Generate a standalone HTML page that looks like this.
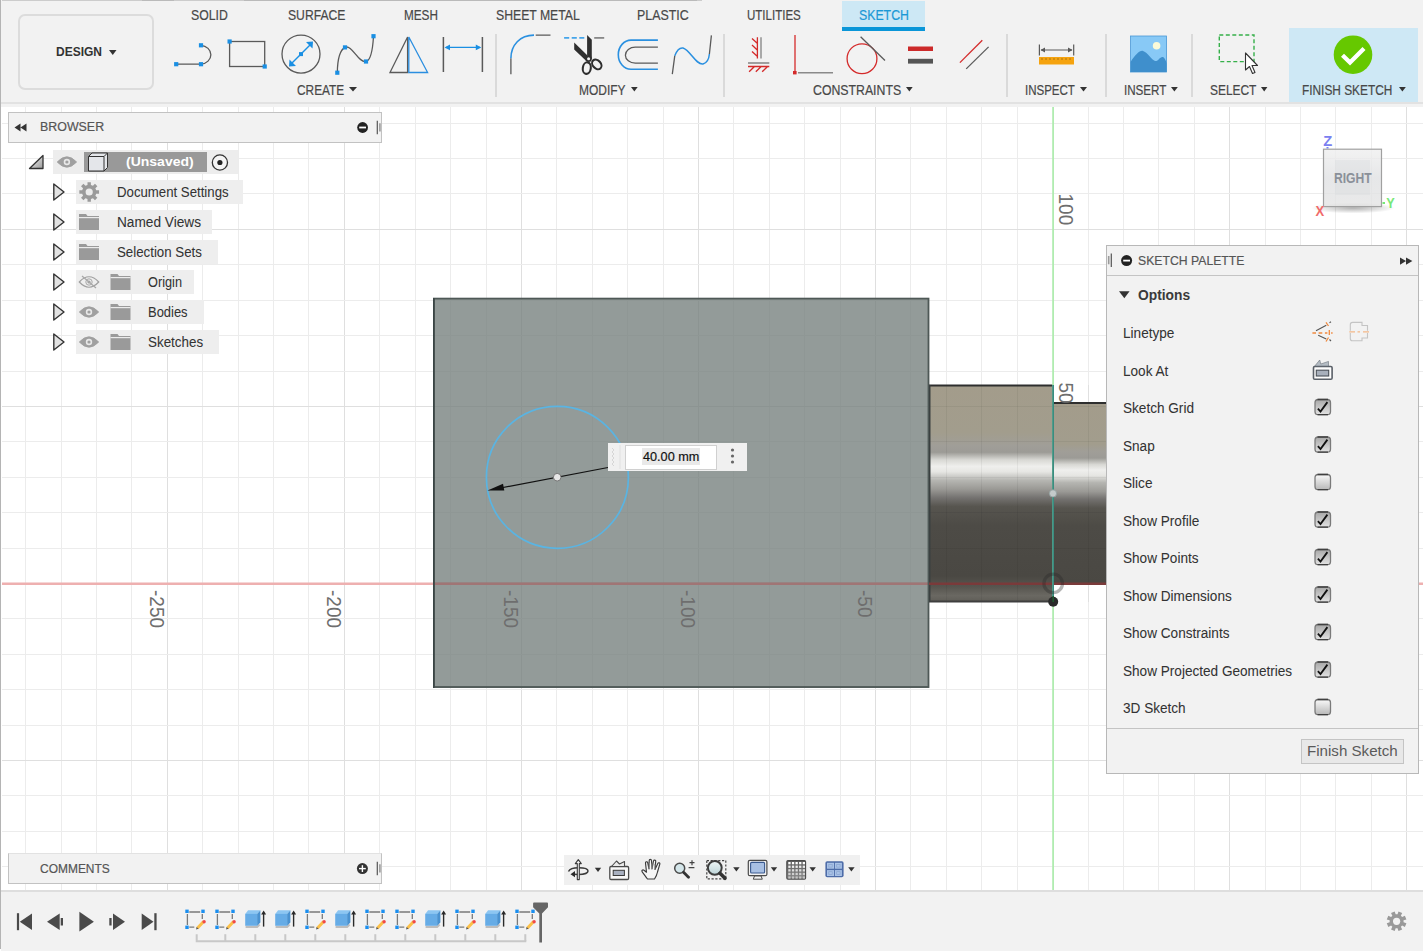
<!DOCTYPE html>
<html><head><meta charset="utf-8">
<style>
html,body{margin:0;padding:0}
body{width:1423px;height:951px;position:relative;overflow:hidden;background:#fff;font-family:"Liberation Sans",sans-serif;color:#3c3c3c}
.a{position:absolute}
.t{position:absolute;white-space:nowrap;line-height:1}
.tab{position:absolute;top:8px;font-size:12px;color:#474747;white-space:nowrap;line-height:14px}
.grp{position:absolute;top:84px;font-size:12px;color:#474747;white-space:nowrap;line-height:14px}
.dd{display:inline-block;width:0;height:0;border-left:3.5px solid transparent;border-right:3.5px solid transparent;border-top:5px solid #333;margin-left:4px;vertical-align:1px}
.sep{position:absolute;top:34px;width:2px;height:63px;background:#dadada}
svg{overflow:visible}
</style></head>
<body>

<svg class="a" style="left:0;top:0" width="1423" height="951">
<defs>
<linearGradient id="cyl1" x1="0" y1="0" x2="0" y2="1">
<stop offset="0" stop-color="#a39c8b"/>
<stop offset="0.22" stop-color="#a29d8d"/>
<stop offset="0.28" stop-color="#a09e98"/>
<stop offset="0.31" stop-color="#9c9b96"/>
<stop offset="0.345" stop-color="#d8d8d4"/>
<stop offset="0.375" stop-color="#efefed"/>
<stop offset="0.40" stop-color="#e6e6e3"/>
<stop offset="0.44" stop-color="#b5b5b1"/>
<stop offset="0.48" stop-color="#9a9995"/>
<stop offset="0.52" stop-color="#747270"/>
<stop offset="0.56" stop-color="#57554f"/>
<stop offset="0.65" stop-color="#4d4b46"/>
<stop offset="0.88" stop-color="#4a4843"/>
<stop offset="0.93" stop-color="#57554f"/>
<stop offset="0.97" stop-color="#6a6862"/>
<stop offset="1" stop-color="#5f5d57"/>
</linearGradient>
<linearGradient id="cyl2" x1="0" y1="0" x2="0" y2="1">
<stop offset="0" stop-color="#a39c8b"/>
<stop offset="0.227" stop-color="#a29d8d"/>
<stop offset="0.27" stop-color="#a09e98"/>
<stop offset="0.304" stop-color="#9c9b96"/>
<stop offset="0.34" stop-color="#d8d8d4"/>
<stop offset="0.37" stop-color="#efefed"/>
<stop offset="0.40" stop-color="#e6e6e3"/>
<stop offset="0.44" stop-color="#b5b5b1"/>
<stop offset="0.49" stop-color="#9a9995"/>
<stop offset="0.53" stop-color="#747270"/>
<stop offset="0.58" stop-color="#57554f"/>
<stop offset="0.68" stop-color="#4d4b46"/>
<stop offset="1" stop-color="#4a4843"/>
</linearGradient>
</defs>
<rect x="25" y="106" width="1" height="784" fill="#ececec"/>
<rect x="61" y="106" width="1" height="784" fill="#ececec"/>
<rect x="96" y="106" width="1" height="784" fill="#ececec"/>
<rect x="131" y="106" width="1" height="784" fill="#ececec"/>
<rect x="167" y="106" width="1" height="784" fill="#dfdfdf"/>
<rect x="202" y="106" width="1" height="784" fill="#ececec"/>
<rect x="238" y="106" width="1" height="784" fill="#ececec"/>
<rect x="273" y="106" width="1" height="784" fill="#ececec"/>
<rect x="308" y="106" width="1" height="784" fill="#ececec"/>
<rect x="344" y="106" width="1" height="784" fill="#dfdfdf"/>
<rect x="379" y="106" width="1" height="784" fill="#ececec"/>
<rect x="415" y="106" width="1" height="784" fill="#ececec"/>
<rect x="450" y="106" width="1" height="784" fill="#ececec"/>
<rect x="486" y="106" width="1" height="784" fill="#ececec"/>
<rect x="521" y="106" width="1" height="784" fill="#dfdfdf"/>
<rect x="556" y="106" width="1" height="784" fill="#ececec"/>
<rect x="592" y="106" width="1" height="784" fill="#ececec"/>
<rect x="627" y="106" width="1" height="784" fill="#ececec"/>
<rect x="663" y="106" width="1" height="784" fill="#ececec"/>
<rect x="698" y="106" width="1" height="784" fill="#dfdfdf"/>
<rect x="733" y="106" width="1" height="784" fill="#ececec"/>
<rect x="769" y="106" width="1" height="784" fill="#ececec"/>
<rect x="804" y="106" width="1" height="784" fill="#ececec"/>
<rect x="840" y="106" width="1" height="784" fill="#ececec"/>
<rect x="875" y="106" width="1" height="784" fill="#dfdfdf"/>
<rect x="910" y="106" width="1" height="784" fill="#ececec"/>
<rect x="946" y="106" width="1" height="784" fill="#ececec"/>
<rect x="981" y="106" width="1" height="784" fill="#ececec"/>
<rect x="1017" y="106" width="1" height="784" fill="#ececec"/>
<rect x="1088" y="106" width="1" height="784" fill="#ececec"/>
<rect x="1123" y="106" width="1" height="784" fill="#ececec"/>
<rect x="1158" y="106" width="1" height="784" fill="#ececec"/>
<rect x="1194" y="106" width="1" height="784" fill="#ececec"/>
<rect x="1229" y="106" width="1" height="784" fill="#dfdfdf"/>
<rect x="1265" y="106" width="1" height="784" fill="#ececec"/>
<rect x="1300" y="106" width="1" height="784" fill="#ececec"/>
<rect x="1335" y="106" width="1" height="784" fill="#ececec"/>
<rect x="1371" y="106" width="1" height="784" fill="#ececec"/>
<rect x="1406" y="106" width="1" height="784" fill="#dfdfdf"/>
<rect x="2" y="123" width="1421" height="1" fill="#ececec"/>
<rect x="2" y="158" width="1421" height="1" fill="#ececec"/>
<rect x="2" y="193" width="1421" height="1" fill="#ececec"/>
<rect x="2" y="229" width="1421" height="1" fill="#dfdfdf"/>
<rect x="2" y="264" width="1421" height="1" fill="#ececec"/>
<rect x="2" y="300" width="1421" height="1" fill="#ececec"/>
<rect x="2" y="335" width="1421" height="1" fill="#ececec"/>
<rect x="2" y="371" width="1421" height="1" fill="#ececec"/>
<rect x="2" y="406" width="1421" height="1" fill="#dfdfdf"/>
<rect x="2" y="441" width="1421" height="1" fill="#ececec"/>
<rect x="2" y="477" width="1421" height="1" fill="#ececec"/>
<rect x="2" y="512" width="1421" height="1" fill="#ececec"/>
<rect x="2" y="548" width="1421" height="1" fill="#ececec"/>
<rect x="2" y="618" width="1421" height="1" fill="#ececec"/>
<rect x="2" y="654" width="1421" height="1" fill="#ececec"/>
<rect x="2" y="689" width="1421" height="1" fill="#ececec"/>
<rect x="2" y="725" width="1421" height="1" fill="#ececec"/>
<rect x="2" y="760" width="1421" height="1" fill="#dfdfdf"/>
<rect x="2" y="795" width="1421" height="1" fill="#ececec"/>
<rect x="2" y="831" width="1421" height="1" fill="#ececec"/>
<rect x="2" y="866" width="1421" height="1" fill="#ececec"/>
<rect x="2" y="582.5" width="1421" height="2.5" fill="#eeb0b0"/>
<rect x="433" y="298" width="496" height="390" fill="rgb(113,123,121)" fill-opacity="0.76"/>
<rect x="433" y="582.5" width="496" height="2.5" fill="#a07575"/>
<rect x="433.9" y="298.6" width="494.6" height="388.4" fill="none" stroke="#4e5856" stroke-width="1.8"/>
<rect x="433" y="298" width="1.6" height="390" fill="#3a4545"/>
<rect x="929" y="385" width="124" height="217" fill="url(#cyl1)"/>
<rect x="1053" y="403" width="53" height="181" fill="url(#cyl2)"/>
<rect x="946" y="385" width="1" height="217" fill="#000" fill-opacity="0.05"/>
<rect x="981" y="385" width="1" height="217" fill="#000" fill-opacity="0.05"/>
<rect x="1017" y="385" width="1" height="217" fill="#000" fill-opacity="0.05"/>
<rect x="1088" y="385" width="1" height="217" fill="#000" fill-opacity="0.05"/>
<rect x="929" y="406" width="177" height="1" fill="#000" fill-opacity="0.05"/>
<rect x="929" y="441" width="177" height="1" fill="#000" fill-opacity="0.05"/>
<rect x="929" y="477" width="177" height="1" fill="#000" fill-opacity="0.05"/>
<rect x="929" y="512" width="177" height="1" fill="#000" fill-opacity="0.05"/>
<rect x="929" y="548" width="177" height="1" fill="#000" fill-opacity="0.05"/>
<rect x="929" y="384.5" width="124" height="2" fill="#2e2e2e"/>
<rect x="1053" y="402" width="53" height="2" fill="#2e2e2e"/>
<rect x="929" y="600.5" width="124" height="2" fill="#3e3e3e"/>
<rect x="929" y="385" width="1.5" height="217" fill="#3a4040"/>
<rect x="929" y="582.5" width="177" height="2.5" fill="#7a3a3a"/>
<rect x="1052.2" y="106" width="1.8" height="784" fill="#b0ecb0"/>
<rect x="1052.2" y="385" width="1.8" height="217" fill="#3a8c80"/>
<circle cx="1053.2" cy="583.4" r="9.3" fill="none" stroke="#282828" stroke-opacity="0.35" stroke-width="3.2"/>
<circle cx="1053.2" cy="601.7" r="5" fill="#2a2a2a"/>
<path d="M1053.2 596 V602" stroke="#1e5a30" stroke-width="1.5"/>
<circle cx="1053" cy="493.4" r="3.6" fill="#c4caca" stroke="#8fa0a0" stroke-width="0.8"/>
<circle cx="557.4" cy="477.3" r="71" fill="none" stroke="#5ab4e2" stroke-width="1.7"/>
<line x1="608" y1="467.5" x2="498" y2="488.5" stroke="#111" stroke-width="1.2"/>
<path d="M487.5 490.5 L503 483.8 L504.3 490.6 Z" fill="#111"/>
<circle cx="557.2" cy="477.2" r="3.8" fill="#e8e8e8" stroke="#777" stroke-width="1"/>
<text x="0" y="0" transform="translate(150.2,590) rotate(90) scale(0.95 1)" font-family="Liberation Sans" font-size="20" fill="#6e6e6e">-250</text>
<text x="0" y="0" transform="translate(327.2,590) rotate(90) scale(0.95 1)" font-family="Liberation Sans" font-size="20" fill="#6e6e6e">-200</text>
<text x="0" y="0" transform="translate(504.2,590) rotate(90) scale(0.95 1)" font-family="Liberation Sans" font-size="20" fill="#6e6e6e">-150</text>
<text x="0" y="0" transform="translate(681.2,590) rotate(90) scale(0.95 1)" font-family="Liberation Sans" font-size="20" fill="#6e6e6e">-100</text>
<text x="0" y="0" transform="translate(858.2,590) rotate(90) scale(0.95 1)" font-family="Liberation Sans" font-size="20" fill="#6e6e6e">-50</text>
<text x="0" y="0" transform="translate(1059.2,193.5) rotate(90) scale(0.95 1)" font-family="Liberation Sans" font-size="20" fill="#6e6e6e">100</text>
<text x="0" y="0" transform="translate(1059.2,382.5) rotate(90) scale(0.95 1)" font-family="Liberation Sans" font-size="20" fill="#6e6e6e">50</text>
</svg>
<div class="a" style="left:0;top:0;width:1423px;height:107px;background:#f2f2f2"></div>
<div class="a" style="left:0;top:102px;width:1423px;height:2px;background:#e2e2e2"></div>
<div class="a" style="left:2px;top:0;width:700px;height:1px;background:#cccccc"></div><div class="a" style="left:142px;top:0;width:32px;height:1px;background:#bababa"></div><div class="a" style="left:244px;top:0;width:453px;height:1px;background:#bababa"></div>
<div class="a" style="left:18px;top:14px;width:132px;height:72px;border:2px solid #dcdcdc;border-radius:7px"></div>
<div class="a" style="left:842px;top:1px;width:83px;height:30px;background:#cde8f5"></div>
<div class="a" style="left:842px;top:27px;width:83px;height:4px;background:#0a96d8"></div>
<div class="sep" style="left:495px"></div>
<div class="sep" style="left:723px"></div>
<div class="sep" style="left:1006px"></div>
<div class="sep" style="left:1105px"></div>
<div class="sep" style="left:1191px"></div>
<div class="a" style="left:1289px;top:28px;width:129px;height:74px;background:#cee8f5"></div>

<div class="t" style="left:56.20px;top:45.20px;font-size:13px;color:#333;font-weight:bold;transform:scaleX(0.9227);transform-origin:0 0;">DESIGN</div>
<svg class="a" style="left:108.25px;top:48.80px" width="9.50" height="7.00"><path d="M1 1 H8.50 L4.75 6.00 Z" fill="#333"/></svg>
<div class="t" style="left:191.20px;top:7.65px;font-size:14px;color:#484848;-webkit-text-stroke:0.2px #484848;transform:scaleX(0.8738);transform-origin:0 0;">SOLID</div>
<div class="t" style="left:288.40px;top:7.65px;font-size:14px;color:#484848;-webkit-text-stroke:0.2px #484848;transform:scaleX(0.8677);transform-origin:0 0;">SURFACE</div>
<div class="t" style="left:404.30px;top:7.65px;font-size:14px;color:#484848;-webkit-text-stroke:0.2px #484848;transform:scaleX(0.8379);transform-origin:0 0;">MESH</div>
<div class="t" style="left:496.30px;top:7.65px;font-size:14px;color:#484848;-webkit-text-stroke:0.2px #484848;transform:scaleX(0.8732);transform-origin:0 0;">SHEET METAL</div>
<div class="t" style="left:637.20px;top:7.65px;font-size:14px;color:#484848;-webkit-text-stroke:0.2px #484848;transform:scaleX(0.8839);transform-origin:0 0;">PLASTIC</div>
<div class="t" style="left:747.40px;top:7.65px;font-size:14px;color:#484848;-webkit-text-stroke:0.2px #484848;transform:scaleX(0.8229);transform-origin:0 0;">UTILITIES</div>
<div class="t" style="left:858.90px;top:7.65px;font-size:14px;color:#1b98d5;-webkit-text-stroke:0.2px #1b98d5;transform:scaleX(0.8790);transform-origin:0 0;">SKETCH</div>
<div class="t" style="left:297.30px;top:82.95px;font-size:14px;color:#484848;-webkit-text-stroke:0.2px #484848;transform:scaleX(0.8471);transform-origin:0 0;">CREATE</div>
<svg class="a" style="left:348.00px;top:86.00px" width="10.00" height="6.60"><path d="M1 1 H9.00 L5.00 5.60 Z" fill="#333"/></svg>
<div class="t" style="left:579.00px;top:82.95px;font-size:14px;color:#484848;-webkit-text-stroke:0.2px #484848;transform:scaleX(0.8557);transform-origin:0 0;">MODIFY</div>
<svg class="a" style="left:630.30px;top:86.00px" width="8.70" height="6.60"><path d="M1 1 H7.70 L4.35 5.60 Z" fill="#333"/></svg>
<div class="t" style="left:813.00px;top:82.95px;font-size:14px;color:#484848;-webkit-text-stroke:0.2px #484848;transform:scaleX(0.8783);transform-origin:0 0;">CONSTRAINTS</div>
<svg class="a" style="left:904.90px;top:86.00px" width="8.70" height="6.60"><path d="M1 1 H7.70 L4.35 5.60 Z" fill="#333"/></svg>
<div class="t" style="left:1024.90px;top:82.95px;font-size:14px;color:#484848;-webkit-text-stroke:0.2px #484848;transform:scaleX(0.8222);transform-origin:0 0;">INSPECT</div>
<svg class="a" style="left:1078.70px;top:86.00px" width="9.00" height="6.60"><path d="M1 1 H8.00 L4.50 5.60 Z" fill="#333"/></svg>
<div class="t" style="left:1123.50px;top:82.95px;font-size:14px;color:#484848;-webkit-text-stroke:0.2px #484848;transform:scaleX(0.8297);transform-origin:0 0;">INSERT</div>
<svg class="a" style="left:1169.80px;top:86.00px" width="8.80" height="6.60"><path d="M1 1 H7.80 L4.40 5.60 Z" fill="#333"/></svg>
<div class="t" style="left:1209.60px;top:82.95px;font-size:14px;color:#484848;-webkit-text-stroke:0.2px #484848;transform:scaleX(0.8520);transform-origin:0 0;">SELECT</div>
<svg class="a" style="left:1260.40px;top:86.00px" width="8.40" height="6.60"><path d="M1 1 H7.40 L4.20 5.60 Z" fill="#333"/></svg>
<div class="t" style="left:1302.40px;top:82.95px;font-size:14px;color:#484848;-webkit-text-stroke:0.2px #484848;transform:scaleX(0.8476);transform-origin:0 0;">FINISH SKETCH</div>
<svg class="a" style="left:1397.60px;top:86.00px" width="8.80" height="6.60"><path d="M1 1 H7.80 L4.40 5.60 Z" fill="#333"/></svg>
<svg class="a" style="left:0;top:0" width="1423" height="106">
<path d="M176 64.2 H201 M201 45.3 A11 9.5 0 0 1 201 64.2" fill="none" stroke="#5a5a5a" stroke-width="1.3"/>
<rect x="174.1" y="62.1" width="4.2" height="4.2" fill="#1a8fe3"/><rect x="198.9" y="62.1" width="4.2" height="4.2" fill="#1a8fe3"/><rect x="198.9" y="43.2" width="4.2" height="4.2" fill="#1a8fe3"/>
<rect x="229.6" y="41.5" width="35.1" height="25" fill="none" stroke="#5a5a5a" stroke-width="1.3"/>
<rect x="227.5" y="39.4" width="4.2" height="4.2" fill="#1a8fe3"/><rect x="262.6" y="64.4" width="4.2" height="4.2" fill="#1a8fe3"/>
<circle cx="301" cy="54.1" r="19" fill="none" stroke="#5a5a5a" stroke-width="1.3"/>
<path d="M290 65 L312 43" stroke="#1a8fe3" stroke-width="1.5"/><path d="M289 66.5 L289.5 59.5 L296 66 Z M313 41.5 L312.5 48.5 L306 42 Z" fill="#1a8fe3"/>
<rect x="299.0" y="52.1" width="4" height="4" fill="#1a8fe3"/>
<path d="M337.3 72.7 C337.5 60 340 50 345 47.4 C352 44 358 63 366 61.5 C372 60 373 45 373.5 36.2" fill="none" stroke="#5a5a5a" stroke-width="1.3"/>
<rect x="335.2" y="70.6" width="4.2" height="4.2" fill="#1a8fe3"/><rect x="342.9" y="45.3" width="4.2" height="4.2" fill="#1a8fe3"/><rect x="363.9" y="59.4" width="4.2" height="4.2" fill="#1a8fe3"/><rect x="371.4" y="34.1" width="4.2" height="4.2" fill="#1a8fe3"/>
<path d="M407.6 37 L390 72.5 H407.6 Z" fill="none" stroke="#5a5a5a" stroke-width="1.3"/>
<path d="M408.8 37 L427.6 72.5 H408.8 Z" fill="none" stroke="#2a8ee0" stroke-width="1.3"/>
<path d="M443.4 37 V72 M482.4 37 V72" stroke="#5a5a5a" stroke-width="1.5"/>
<path d="M446 47.4 H480" stroke="#1a8fe3" stroke-width="1.3"/><path d="M444.5 47.4 L450 44.5 V50.3 Z M481.3 47.4 L475.8 44.5 V50.3 Z" fill="#1a8fe3"/>
<path d="M510.9 58.2 V74.2 M535.7 35.1 H550.5" stroke="#5a5a5a" stroke-width="1.3" fill="none"/>
<path d="M510.9 58.2 C511 45 520 35.1 534 35.1" stroke="#2a90e0" stroke-width="1.6" fill="none"/>
<path d="M564.1 37.9 H584.3" stroke="#45a5ea" stroke-width="1.9" stroke-dasharray="5.1 2.5" fill="none"/><path d="M594.2 37.9 H604.2" stroke="#888" stroke-width="1.8"/>
<path d="M587.1 35 L591.8 39.7 V59.5 L587.1 55.5 Z" fill="#2e2e2e"/>
<path d="M574.2 42.4 L587.5 55.5 L590.5 58.2 L586.3 61 L574.2 49.5 Z" fill="#2e2e2e"/>
<circle cx="588.6" cy="58.7" r="3.2" fill="#2e2e2e"/><circle cx="588.6" cy="58.7" r="1.5" fill="#f2f2f2"/>
<ellipse cx="586.8" cy="68.1" rx="4.0" ry="5.8" fill="none" stroke="#2e2e2e" stroke-width="2.1" transform="rotate(8 586.8 68.1)"/>
<ellipse cx="596.8" cy="64.4" rx="4.0" ry="5.4" fill="none" stroke="#2e2e2e" stroke-width="2.1" transform="rotate(-42 596.8 64.4)"/>
<path d="M657.9 40.1 H631 A12.7 14.55 0 0 0 631 69.2 H657.9" fill="none" stroke="#2a90e0" stroke-width="1.6"/>
<path d="M657.9 47.2 H635.3 A9.9 8 0 0 0 635.3 63.2 H657.9" fill="none" stroke="#5a5a5a" stroke-width="1.3"/>
<path d="M672.3 74.2 L674.8 55.7 M709.4 54 L711.4 35.4" fill="none" stroke="#5a5a5a" stroke-width="1.3"/>
<path d="M674.8 55.7 C677 50 680 47.5 683 48 C690 50 696 65 703 64 C707 63 709 58 709.4 54" fill="none" stroke="#2a90e0" stroke-width="1.5"/>
<path d="M761 37.3 V58.5" stroke="#8a8a8a" stroke-width="1.4"/>
<path d="M752 38.4 L757.5 43.5 M752 45.1 L757.5 50.2 M752 51.4 L757.5 56.5 M757.4 37.3 V58.5" stroke="#d42a2a" stroke-width="1.3" fill="none"/>
<path d="M748 63 H769.3" stroke="#8a8a8a" stroke-width="1.6"/>
<path d="M748 66.5 H769.3 M749.1 71.8 L754.5 66.5 M755.8 71.8 L761.2 66.5 M762.2 71.8 L767.6 66.5" stroke="#d42a2a" stroke-width="1.3" fill="none"/>
<path d="M795 35 V71" stroke="#d42a2a" stroke-width="1.3"/><rect x="793" y="71" width="3.6" height="3.4" fill="#d42a2a"/><path d="M798 72.8 H833" stroke="#8a8a8a" stroke-width="1.5"/>
<circle cx="862" cy="58.7" r="14.9" fill="none" stroke="#d42a2a" stroke-width="1.3"/><path d="M860.6 36.7 L885 60.5" stroke="#5a5a5a" stroke-width="1.3"/>
<rect x="908" y="46.5" width="25" height="4.5" fill="#cc2a2a"/><rect x="908" y="58.8" width="25" height="4.8" fill="#555"/>
<path d="M959.9 62.6 L982.3 40.3" stroke="#d42a2a" stroke-width="1.3"/><path d="M966.2 68.9 L988.6 46.9" stroke="#5a5a5a" stroke-width="1.3"/>
<rect x="1039" y="57" width="35" height="7.5" fill="#f5a30f"/>
<path d="M1042 58 V60 M1046 58 V60 M1050 58 V60 M1054 58 V60 M1058 58 V60 M1062 58 V60 M1066 58 V60 M1070 58 V60" stroke="#9a6a10" stroke-width="0.8"/>
<path d="M1039.4 44.6 V55.4 M1073.7 44.6 V55.4 M1041 50 H1072" stroke="#5a5a5a" stroke-width="1.2"/><path d="M1040.5 50 L1045 47.5 V52.5 Z M1072.6 50 L1068 47.5 V52.5 Z" fill="#5a5a5a"/>
<rect x="1130.6" y="36" width="36" height="36" fill="#88c9f6" stroke="#4a98d6" stroke-width="0.8"/>
<circle cx="1156.6" cy="45.8" r="3.8" fill="#fafad8"/>
<path d="M1130.6 62 C1135 55 1140 50 1143 51 C1147 52 1152 60 1155 61 C1158 62 1160 56 1163 57 C1165 58 1166.6 62 1166.6 64 V72 H1130.6 Z" fill="#3f8fcc"/>
<rect x="1219.3" y="35" width="34.7" height="26.6" fill="none" stroke="#36b04a" stroke-width="1.4" stroke-dasharray="4 2.5"/>
<path d="M1245.5 53 V70 L1249.5 66.5 L1252.5 73.5 L1255 72.5 L1252 65.5 L1257.5 65.5 Z" fill="#fff" stroke="#333" stroke-width="1.1" stroke-linejoin="round"/>
<circle cx="1353" cy="54.7" r="19.3" fill="#66c800"/>
<path d="M1342.5 55.2 L1350 62.5 L1364 48.5" fill="none" stroke="#fff" stroke-width="4.3"/>
</svg>
<div class="a" style="left:0;top:0;width:1px;height:949px;background:#b4b4b4"></div>
<div class="a" style="left:1px;top:890px;width:1422px;height:61px;background:#f2f2f2"></div>
<div class="a" style="left:1px;top:890px;width:1422px;height:2px;background:#dedede"></div>

<div class="a" style="left:8px;top:112px;width:372px;height:29px;border:1px solid #c2c2c2;background:#f2f2f2"></div>
<div class="t" style="left:39.70px;top:120.39px;font-size:13.6px;color:#555;-webkit-text-stroke:0.2px #555;transform:scaleX(0.9125);transform-origin:0 0;">BROWSER</div>
<div class="a" style="left:8px;top:853px;width:372px;height:29px;border:1px solid #c2c2c2;border-top-color:#e2e2e2;background:#f2f2f2"></div>
<div class="t" style="left:40.10px;top:861.63px;font-size:13.2px;color:#555;-webkit-text-stroke:0.2px #555;transform:scaleX(0.9075);transform-origin:0 0;">COMMENTS</div>
<div class="a" style="left:53px;top:150px;width:185px;height:24px;background:#ededed"></div>
<div class="a" style="left:84px;top:152px;width:123px;height:20px;background:#999"></div>
<div class="t" style="left:126.20px;top:155.29px;font-size:13.6px;color:#fff;font-weight:bold;transform:scaleX(1.0296);transform-origin:0 0;">(Unsaved)</div>
<div class="a" style="left:76px;top:180px;width:167px;height:24px;background:#eeeeee"></div>
<div class="t" style="left:117.20px;top:185.15px;font-size:14px;color:#333;-webkit-text-stroke:0.05px #333;transform:scaleX(0.9434);transform-origin:0 0;">Document Settings</div>
<div class="a" style="left:76px;top:210px;width:136px;height:24px;background:#eeeeee"></div>
<div class="t" style="left:117.20px;top:215.15px;font-size:14px;color:#333;-webkit-text-stroke:0.05px #333;transform:scaleX(0.9756);transform-origin:0 0;">Named Views</div>
<div class="a" style="left:76px;top:240px;width:142px;height:24px;background:#eeeeee"></div>
<div class="t" style="left:117.20px;top:245.15px;font-size:14px;color:#333;-webkit-text-stroke:0.05px #333;transform:scaleX(0.9483);transform-origin:0 0;">Selection Sets</div>
<div class="a" style="left:76px;top:270px;width:118px;height:24px;background:#eeeeee"></div>
<div class="t" style="left:148.40px;top:275.15px;font-size:14px;color:#333;-webkit-text-stroke:0.05px #333;transform:scaleX(0.9096);transform-origin:0 0;">Origin</div>
<div class="a" style="left:76px;top:300px;width:128px;height:24px;background:#eeeeee"></div>
<div class="t" style="left:148.40px;top:305.15px;font-size:14px;color:#333;-webkit-text-stroke:0.05px #333;transform:scaleX(0.9244);transform-origin:0 0;">Bodies</div>
<div class="a" style="left:76px;top:330px;width:143px;height:24px;background:#eeeeee"></div>
<div class="t" style="left:148.40px;top:335.15px;font-size:14px;color:#333;-webkit-text-stroke:0.05px #333;transform:scaleX(0.9564);transform-origin:0 0;">Sketches</div>
<svg class="a" style="left:0;top:0" width="400" height="400">
<path d="M14.5 127.5 L20.5 123.5 V131.5 Z M20.5 127.5 L26.5 123.5 V131.5 Z" fill="#333"/>
<circle cx="362.6" cy="127.5" r="5.4" fill="#222"/><rect x="359.2" y="126.6" width="6.8" height="1.8" fill="#fff"/>
<path d="M377.3 120.8 V134.3" stroke="#555" stroke-width="1.2"/><path d="M379.9 123.3 V131.6" stroke="#9a9a9a" stroke-width="1.6"/>
<defs><linearGradient id="tg" x1="0" y1="0" x2="1" y2="1"><stop offset="0" stop-color="#fafafa"/><stop offset="1" stop-color="#9a9a9a"/></linearGradient></defs>
<path d="M43 155.5 V168.5 H29.5 Z" fill="url(#tg)" stroke="#333" stroke-width="1.3" stroke-linejoin="round"/>
<path d="M57.2 162 Q66.9 151.5 76.60000000000001 162 Q66.9 172.5 57.2 162 Z" fill="#a0a0a0" stroke="#a0a0a0" stroke-width="0.8"/>
<circle cx="66.9" cy="162" r="3.2" fill="#e8e8e8" stroke="none" stroke-width="1"/><circle cx="66.9" cy="162" r="1.6" fill="#a0a0a0"/>
<path d="M88.5 156.5 L92 153 H107.5 V167.5 L104 171 H88.5 Z" fill="#e4e6ea" stroke="#333" stroke-width="1"/>
<path d="M88.5 156.5 H104 V171 M104 156.5 L107.5 153" fill="none" stroke="#333" stroke-width="1"/>
<circle cx="219.9" cy="162.5" r="7.6" fill="#f4f4f4" stroke="#333" stroke-width="1.3"/><circle cx="219.9" cy="162.5" r="2.6" fill="#222"/>
<path d="M53.8 184 L64 192 L53.8 200 Z" fill="#e2e2e2" stroke="#333" stroke-width="1.4" stroke-linejoin="round"/>
<path d="M96.19 190.29 L99.06 190.31 L99.06 193.69 L96.19 193.71 L95.36 195.74 L97.37 197.77 L94.97 200.17 L92.94 198.16 L90.91 198.99 L90.89 201.86 L87.51 201.86 L87.49 198.99 L85.46 198.16 L83.43 200.17 L81.03 197.77 L83.04 195.74 L82.21 193.71 L79.34 193.69 L79.34 190.31 L82.21 190.29 L83.04 188.26 L81.03 186.23 L83.43 183.83 L85.46 185.84 L87.49 185.01 L87.51 182.14 L90.89 182.14 L90.91 185.01 L92.94 185.84 L94.97 183.83 L97.37 186.23 L95.36 188.26 Z" fill="#9a9a9a"/><circle cx="89.2" cy="192" r="3.60" fill="#ebebeb"/>
<path d="M53.8 214 L64 222 L53.8 230 Z" fill="#e2e2e2" stroke="#333" stroke-width="1.4" stroke-linejoin="round"/>
<path d="M79 214 H86 L87.5 216 H99 V230 H79 Z" fill="#9a9a9a"/><rect x="79" y="217" width="20" height="1.2" fill="#ebebeb"/>
<path d="M53.8 244 L64 252 L53.8 260 Z" fill="#e2e2e2" stroke="#333" stroke-width="1.4" stroke-linejoin="round"/>
<path d="M79 244 H86 L87.5 246 H99 V260 H79 Z" fill="#9a9a9a"/><rect x="79" y="247" width="20" height="1.2" fill="#ebebeb"/>
<path d="M53.8 274 L64 282 L53.8 290 Z" fill="#e2e2e2" stroke="#333" stroke-width="1.4" stroke-linejoin="round"/>
<path d="M79.3 282 Q89 271.5 98.7 282 Q89 292.5 79.3 282 Z" fill="none" stroke="#a0a0a0" stroke-width="1.2"/>
<circle cx="89" cy="282" r="3.2" fill="none" stroke="#a8a8a8" stroke-width="1"/><circle cx="89" cy="282" r="1.6" fill="#a0a0a0"/>
<path d="M82 276 L96 288" stroke="#a8a8a8" stroke-width="1.2"/>
<path d="M110.5 274 H117.5 L119.0 276 H130.5 V290 H110.5 Z" fill="#9a9a9a"/><rect x="110.5" y="277" width="20" height="1.2" fill="#ebebeb"/>
<path d="M53.8 304 L64 312 L53.8 320 Z" fill="#e2e2e2" stroke="#333" stroke-width="1.4" stroke-linejoin="round"/>
<path d="M79.3 312 Q89 301.5 98.7 312 Q89 322.5 79.3 312 Z" fill="#a0a0a0" stroke="#a0a0a0" stroke-width="0.8"/>
<circle cx="89" cy="312" r="3.2" fill="#e8e8e8" stroke="none" stroke-width="1"/><circle cx="89" cy="312" r="1.6" fill="#a0a0a0"/>
<path d="M110.5 304 H117.5 L119.0 306 H130.5 V320 H110.5 Z" fill="#9a9a9a"/><rect x="110.5" y="307" width="20" height="1.2" fill="#ebebeb"/>
<path d="M53.8 334 L64 342 L53.8 350 Z" fill="#e2e2e2" stroke="#333" stroke-width="1.4" stroke-linejoin="round"/>
<path d="M79.3 342 Q89 331.5 98.7 342 Q89 352.5 79.3 342 Z" fill="#a0a0a0" stroke="#a0a0a0" stroke-width="0.8"/>
<circle cx="89" cy="342" r="3.2" fill="#e8e8e8" stroke="none" stroke-width="1"/><circle cx="89" cy="342" r="1.6" fill="#a0a0a0"/>
<path d="M110.5 334 H117.5 L119.0 336 H130.5 V350 H110.5 Z" fill="#9a9a9a"/><rect x="110.5" y="337" width="20" height="1.2" fill="#ebebeb"/>
</svg>
<svg class="a" style="left:0;top:840px" width="400" height="60"><circle cx="362.4" cy="28.6" r="5.5" fill="#333"/><rect x="359" y="27.9" width="6.8" height="1.4" fill="#fff"/><rect x="361.7" y="25.2" width="1.4" height="6.8" fill="#fff"/><path d="M377.3 21.8 V35.3" stroke="#555" stroke-width="1.2"/><path d="M379.9 24.3 V32.6" stroke="#9a9a9a" stroke-width="1.6"/></svg>
<svg class="a" style="left:0;top:890px" width="1423" height="61">
<rect x="16.9" y="23.200000000000045" width="2.2" height="17" fill="#4a4a4a"/><path d="M32 23.5 V40 L19.8 31.700000000000045 Z" fill="#4a4a4a"/>
<path d="M59.7 23.5 V40 L47 31.700000000000045 Z" fill="#4a4a4a"/><rect x="60.7" y="28" width="2.3" height="7.5" fill="#4a4a4a"/>
<path d="M79.4 21.799999999999955 V41.5 L93.9 31.700000000000045 Z" fill="#4a4a4a"/>
<rect x="109.3" y="28" width="2.3" height="7.5" fill="#4a4a4a"/><path d="M113 23.5 V40 L125 31.700000000000045 Z" fill="#4a4a4a"/>
<path d="M141.7 23.5 V40 L153.5 31.700000000000045 Z" fill="#4a4a4a"/><rect x="154.3" y="23.200000000000045" width="2.3" height="17" fill="#4a4a4a"/>
<path d="M196.7 44.200000000000045 V51.299999999999955 H526.3" fill="none" stroke="#c8c8c8" stroke-width="2"/>
<rect x="224.3" y="44.200000000000045" width="2" height="7" fill="#c8c8c8"/>
<rect x="254.3" y="44.200000000000045" width="2" height="7" fill="#c8c8c8"/>
<rect x="284.3" y="44.200000000000045" width="2" height="7" fill="#c8c8c8"/>
<rect x="314.3" y="44.200000000000045" width="2" height="7" fill="#c8c8c8"/>
<rect x="344.3" y="44.200000000000045" width="2" height="7" fill="#c8c8c8"/>
<rect x="374.3" y="44.200000000000045" width="2" height="7" fill="#c8c8c8"/>
<rect x="404.3" y="44.200000000000045" width="2" height="7" fill="#c8c8c8"/>
<rect x="434.3" y="44.200000000000045" width="2" height="7" fill="#c8c8c8"/>
<rect x="464.3" y="44.200000000000045" width="2" height="7" fill="#c8c8c8"/>
<rect x="494.3" y="44.200000000000045" width="2" height="7" fill="#c8c8c8"/>
<rect x="524.3" y="44.200000000000045" width="2" height="7" fill="#c8c8c8"/>
<path d="M189.29999999999998 22 H200.2 M187.4 23.899999999999977 V35 M202.29999999999998 23.899999999999977 V29 M189.29999999999998 37.200000000000045 H194.29999999999998" stroke="#7a7a7a" stroke-width="1.3"/>
<rect x="185.29999999999998" y="19.600000000000023" width="3.4" height="3.4" fill="#1b8ff0"/><rect x="201.29999999999998" y="19.600000000000023" width="3.4" height="3.4" fill="#1b8ff0"/><rect x="185.29999999999998" y="35.60000000000002" width="3.4" height="3.4" fill="#1b8ff0"/>
<path d="M197.29999999999998 38.299999999999955 L203.6 31.5" stroke="#fbc04a" stroke-width="3"/><circle cx="204.1" cy="31.799999999999955" r="1.7" fill="#f04848"/><path d="M196.1 39.5 L196.6 37 L198.6 38.799999999999955 Z" fill="#555"/>
<path d="M219.29999999999998 22 H230.2 M217.4 23.899999999999977 V35 M232.29999999999998 23.899999999999977 V29 M219.29999999999998 37.200000000000045 H224.29999999999998" stroke="#7a7a7a" stroke-width="1.3"/>
<rect x="215.29999999999998" y="19.600000000000023" width="3.4" height="3.4" fill="#1b8ff0"/><rect x="231.29999999999998" y="19.600000000000023" width="3.4" height="3.4" fill="#1b8ff0"/><rect x="215.29999999999998" y="35.60000000000002" width="3.4" height="3.4" fill="#1b8ff0"/>
<path d="M227.29999999999998 38.299999999999955 L233.6 31.5" stroke="#fbc04a" stroke-width="3"/><circle cx="234.1" cy="31.799999999999955" r="1.7" fill="#f04848"/><path d="M226.1 39.5 L226.6 37 L228.6 38.799999999999955 Z" fill="#555"/>
<path d="M245.6 37 H257.1 L259.6 34.5" fill="none" stroke="#bdbdbd" stroke-width="2.2"/>
<path d="M245.2 23.899999999999977 L248.1 20.200000000000045 H260.4 L257.1 23.899999999999977 Z" fill="#8cc6f2"/>
<path d="M257.1 23.899999999999977 L260.4 20.200000000000045 V32.5 L257.1 35.799999999999955 Z" fill="#4a92d0"/>
<rect x="245.2" y="23.899999999999977" width="11.9" height="11.9" fill="#66ace6"/>
<path d="M263.6 36.60000000000002 V22.5" stroke="#2a2a2a" stroke-width="1.4"/><path d="M261.1 24.5 L263.6 20.5 L266.1 24.5 Z" fill="#2a2a2a"/>
<path d="M275.6 37 H287.1 L289.6 34.5" fill="none" stroke="#bdbdbd" stroke-width="2.2"/>
<path d="M275.20000000000005 23.899999999999977 L278.1 20.200000000000045 H290.40000000000003 L287.1 23.899999999999977 Z" fill="#8cc6f2"/>
<path d="M287.1 23.899999999999977 L290.40000000000003 20.200000000000045 V32.5 L287.1 35.799999999999955 Z" fill="#4a92d0"/>
<rect x="275.20000000000005" y="23.899999999999977" width="11.9" height="11.9" fill="#66ace6"/>
<path d="M293.6 36.60000000000002 V22.5" stroke="#2a2a2a" stroke-width="1.4"/><path d="M291.1 24.5 L293.6 20.5 L296.1 24.5 Z" fill="#2a2a2a"/>
<path d="M309.3 22 H320.20000000000005 M307.40000000000003 23.899999999999977 V35 M322.3 23.899999999999977 V29 M309.3 37.200000000000045 H314.3" stroke="#7a7a7a" stroke-width="1.3"/>
<rect x="305.3" y="19.600000000000023" width="3.4" height="3.4" fill="#1b8ff0"/><rect x="321.3" y="19.600000000000023" width="3.4" height="3.4" fill="#1b8ff0"/><rect x="305.3" y="35.60000000000002" width="3.4" height="3.4" fill="#1b8ff0"/>
<path d="M317.3 38.299999999999955 L323.6 31.5" stroke="#fbc04a" stroke-width="3"/><circle cx="324.1" cy="31.799999999999955" r="1.7" fill="#f04848"/><path d="M316.1 39.5 L316.6 37 L318.6 38.799999999999955 Z" fill="#555"/>
<path d="M335.6 37 H347.1 L349.6 34.5" fill="none" stroke="#bdbdbd" stroke-width="2.2"/>
<path d="M335.20000000000005 23.899999999999977 L338.1 20.200000000000045 H350.40000000000003 L347.1 23.899999999999977 Z" fill="#8cc6f2"/>
<path d="M347.1 23.899999999999977 L350.40000000000003 20.200000000000045 V32.5 L347.1 35.799999999999955 Z" fill="#4a92d0"/>
<rect x="335.20000000000005" y="23.899999999999977" width="11.9" height="11.9" fill="#66ace6"/>
<path d="M353.6 36.60000000000002 V22.5" stroke="#2a2a2a" stroke-width="1.4"/><path d="M351.1 24.5 L353.6 20.5 L356.1 24.5 Z" fill="#2a2a2a"/>
<path d="M369.3 22 H380.20000000000005 M367.40000000000003 23.899999999999977 V35 M382.3 23.899999999999977 V29 M369.3 37.200000000000045 H374.3" stroke="#7a7a7a" stroke-width="1.3"/>
<rect x="365.3" y="19.600000000000023" width="3.4" height="3.4" fill="#1b8ff0"/><rect x="381.3" y="19.600000000000023" width="3.4" height="3.4" fill="#1b8ff0"/><rect x="365.3" y="35.60000000000002" width="3.4" height="3.4" fill="#1b8ff0"/>
<path d="M377.3 38.299999999999955 L383.6 31.5" stroke="#fbc04a" stroke-width="3"/><circle cx="384.1" cy="31.799999999999955" r="1.7" fill="#f04848"/><path d="M376.1 39.5 L376.6 37 L378.6 38.799999999999955 Z" fill="#555"/>
<path d="M399.3 22 H410.20000000000005 M397.40000000000003 23.899999999999977 V35 M412.3 23.899999999999977 V29 M399.3 37.200000000000045 H404.3" stroke="#7a7a7a" stroke-width="1.3"/>
<rect x="395.3" y="19.600000000000023" width="3.4" height="3.4" fill="#1b8ff0"/><rect x="411.3" y="19.600000000000023" width="3.4" height="3.4" fill="#1b8ff0"/><rect x="395.3" y="35.60000000000002" width="3.4" height="3.4" fill="#1b8ff0"/>
<path d="M407.3 38.299999999999955 L413.6 31.5" stroke="#fbc04a" stroke-width="3"/><circle cx="414.1" cy="31.799999999999955" r="1.7" fill="#f04848"/><path d="M406.1 39.5 L406.6 37 L408.6 38.799999999999955 Z" fill="#555"/>
<path d="M425.6 37 H437.1 L439.6 34.5" fill="none" stroke="#bdbdbd" stroke-width="2.2"/>
<path d="M425.20000000000005 23.899999999999977 L428.1 20.200000000000045 H440.40000000000003 L437.1 23.899999999999977 Z" fill="#8cc6f2"/>
<path d="M437.1 23.899999999999977 L440.40000000000003 20.200000000000045 V32.5 L437.1 35.799999999999955 Z" fill="#4a92d0"/>
<rect x="425.20000000000005" y="23.899999999999977" width="11.9" height="11.9" fill="#66ace6"/>
<path d="M443.6 36.60000000000002 V22.5" stroke="#2a2a2a" stroke-width="1.4"/><path d="M441.1 24.5 L443.6 20.5 L446.1 24.5 Z" fill="#2a2a2a"/>
<path d="M459.3 22 H470.20000000000005 M457.40000000000003 23.899999999999977 V35 M472.3 23.899999999999977 V29 M459.3 37.200000000000045 H464.3" stroke="#7a7a7a" stroke-width="1.3"/>
<rect x="455.3" y="19.600000000000023" width="3.4" height="3.4" fill="#1b8ff0"/><rect x="471.3" y="19.600000000000023" width="3.4" height="3.4" fill="#1b8ff0"/><rect x="455.3" y="35.60000000000002" width="3.4" height="3.4" fill="#1b8ff0"/>
<path d="M467.3 38.299999999999955 L473.6 31.5" stroke="#fbc04a" stroke-width="3"/><circle cx="474.1" cy="31.799999999999955" r="1.7" fill="#f04848"/><path d="M466.1 39.5 L466.6 37 L468.6 38.799999999999955 Z" fill="#555"/>
<path d="M485.6 37 H497.1 L499.6 34.5" fill="none" stroke="#bdbdbd" stroke-width="2.2"/>
<path d="M485.20000000000005 23.899999999999977 L488.1 20.200000000000045 H500.40000000000003 L497.1 23.899999999999977 Z" fill="#8cc6f2"/>
<path d="M497.1 23.899999999999977 L500.40000000000003 20.200000000000045 V32.5 L497.1 35.799999999999955 Z" fill="#4a92d0"/>
<rect x="485.20000000000005" y="23.899999999999977" width="11.9" height="11.9" fill="#66ace6"/>
<path d="M503.6 36.60000000000002 V22.5" stroke="#2a2a2a" stroke-width="1.4"/><path d="M501.1 24.5 L503.6 20.5 L506.1 24.5 Z" fill="#2a2a2a"/>
<path d="M519.3000000000001 22 H530.2 M517.4 23.899999999999977 V35 M532.3000000000001 23.899999999999977 V29 M519.3000000000001 37.200000000000045 H524.3000000000001" stroke="#7a7a7a" stroke-width="1.3"/>
<rect x="515.3000000000001" y="19.600000000000023" width="3.4" height="3.4" fill="#1b8ff0"/><rect x="531.3000000000001" y="19.600000000000023" width="3.4" height="3.4" fill="#1b8ff0"/><rect x="515.3000000000001" y="35.60000000000002" width="3.4" height="3.4" fill="#1b8ff0"/>
<path d="M527.3000000000001 38.299999999999955 L533.6 31.5" stroke="#fbc04a" stroke-width="3"/><circle cx="534.1" cy="31.799999999999955" r="1.7" fill="#f04848"/><path d="M526.1 39.5 L526.6 37 L528.6 38.799999999999955 Z" fill="#555"/>
<path d="M533.1 13.5 Q533.1 12.600000000000023 534 12.600000000000023 H547.1 Q548 12.600000000000023 548 13.5 V17.200000000000045 L542 23.5 V52.5 H539.3 V23.5 L533.1 17.200000000000045 Z" fill="#666"/>
<path d="M1403.54 32.23 L1406.41 33.22 L1404.89 36.89 L1402.16 35.55 L1400.85 36.86 L1402.19 39.59 L1398.52 41.11 L1397.53 38.24 L1395.67 38.24 L1394.68 41.11 L1391.01 39.59 L1392.35 36.86 L1391.04 35.55 L1388.31 36.89 L1386.79 33.22 L1389.66 32.23 L1389.66 30.37 L1386.79 29.38 L1388.31 25.71 L1391.04 27.05 L1392.35 25.74 L1391.01 23.01 L1394.68 21.49 L1395.67 24.36 L1397.53 24.36 L1398.52 21.49 L1402.19 23.01 L1400.85 25.74 L1402.16 27.05 L1404.89 25.71 L1406.41 29.38 L1403.54 30.37 Z" fill="#999"/><circle cx="1396.6" cy="31.299999999999955" r="3.6" fill="#f2f2f2"/>
</svg>
<div class="a" style="left:1106px;top:245px;width:311px;height:527px;border:1px solid #b8b8b8;background:#f2f2f2"></div>
<div class="a" style="left:1107px;top:275px;width:311px;height:1px;background:#c4c4c4"></div>
<div class="a" style="left:1107px;top:728px;width:311px;height:1px;background:#c4c4c4"></div>
<div class="t" style="left:1137.80px;top:253.86px;font-size:13.4px;color:#555;-webkit-text-stroke:0.2px #555;transform:scaleX(0.9130);transform-origin:0 0;">SKETCH PALETTE</div>
<div class="t" style="left:1137.80px;top:288.13px;font-size:14.5px;color:#3a3a3a;font-weight:bold;transform:scaleX(0.9518);transform-origin:0 0;">Options</div>
<div class="t" style="left:1122.70px;top:326.05px;font-size:14px;color:#333;-webkit-text-stroke:0.05px #333;transform:scaleX(0.9704);transform-origin:0 0;">Linetype</div>
<div class="t" style="left:1122.70px;top:363.55px;font-size:14px;color:#333;-webkit-text-stroke:0.05px #333;transform:scaleX(0.9704);transform-origin:0 0;">Look At</div>
<div class="t" style="left:1122.70px;top:401.05px;font-size:14px;color:#333;-webkit-text-stroke:0.05px #333;transform:scaleX(0.9704);transform-origin:0 0;">Sketch Grid</div>
<div class="t" style="left:1122.70px;top:438.55px;font-size:14px;color:#333;-webkit-text-stroke:0.05px #333;transform:scaleX(0.9704);transform-origin:0 0;">Snap</div>
<div class="t" style="left:1122.70px;top:476.05px;font-size:14px;color:#333;-webkit-text-stroke:0.05px #333;transform:scaleX(0.9704);transform-origin:0 0;">Slice</div>
<div class="t" style="left:1122.70px;top:513.55px;font-size:14px;color:#333;-webkit-text-stroke:0.05px #333;transform:scaleX(0.9704);transform-origin:0 0;">Show Profile</div>
<div class="t" style="left:1122.70px;top:551.05px;font-size:14px;color:#333;-webkit-text-stroke:0.05px #333;transform:scaleX(0.9704);transform-origin:0 0;">Show Points</div>
<div class="t" style="left:1122.70px;top:588.55px;font-size:14px;color:#333;-webkit-text-stroke:0.05px #333;transform:scaleX(0.9704);transform-origin:0 0;">Show Dimensions</div>
<div class="t" style="left:1122.70px;top:626.05px;font-size:14px;color:#333;-webkit-text-stroke:0.05px #333;transform:scaleX(0.9704);transform-origin:0 0;">Show Constraints</div>
<div class="t" style="left:1122.70px;top:663.55px;font-size:14px;color:#333;-webkit-text-stroke:0.05px #333;transform:scaleX(0.9704);transform-origin:0 0;">Show Projected Geometries</div>
<div class="t" style="left:1122.70px;top:701.05px;font-size:14px;color:#333;-webkit-text-stroke:0.05px #333;transform:scaleX(0.9704);transform-origin:0 0;">3D Sketch</div>
<div class="a" style="left:1301px;top:739px;width:101px;height:23px;border:1px solid #c4c4c4;background:#e8e8e8"></div>
<div class="t" style="left:1307.00px;top:742.68px;font-size:15.5px;color:#5a5a5a;transform:scaleX(0.9755);transform-origin:0 0;">Finish Sketch</div>
<svg class="a" style="left:0;top:0" width="1423" height="951">
<defs><linearGradient id="cbg" x1="0" y1="0" x2="0" y2="1"><stop offset="0" stop-color="#fafafa"/><stop offset="1" stop-color="#b8b8b8"/></linearGradient></defs>
<path d="M1108.7 256 V264.3" stroke="#9a9a9a" stroke-width="1.6"/><path d="M1111.3 253.5 V267" stroke="#555" stroke-width="1.2"/>
<circle cx="1126.6" cy="260.6" r="5.5" fill="#222"/><rect x="1123.2" y="259.7" width="6.8" height="1.8" fill="#fff"/>
<path d="M1400 257.4 L1406 261 L1400 264.8 Z M1406 257.4 L1412.4 261 L1406 264.8 Z" fill="#333"/>
<path d="M1119 291.3 H1129.6 L1124.3 298.3 Z" fill="#333"/>
<defs><linearGradient id="cbc" x1="0" y1="0" x2="0" y2="1"><stop offset="0" stop-color="#a8a8a8"/><stop offset="1" stop-color="#e2e2e2"/></linearGradient></defs>
<rect x="1315" y="399.5" width="15.5" height="15.1" rx="3.2" fill="url(#cbc)" stroke="#7a7a7a" stroke-width="1.3"/>
<path d="M1317.5 399.5 H1328 M1317.5 414.6 H1328" stroke="#404040" stroke-width="1.3"/>
<path d="M1317.9 408.7 L1320.5 411.6 L1327.4 402.1" fill="none" stroke="#111" stroke-width="1.8"/>
<rect x="1315" y="437.0" width="15.5" height="15.1" rx="3.2" fill="url(#cbc)" stroke="#7a7a7a" stroke-width="1.3"/>
<path d="M1317.5 437.0 H1328 M1317.5 452.1 H1328" stroke="#404040" stroke-width="1.3"/>
<path d="M1317.9 446.2 L1320.5 449.1 L1327.4 439.6" fill="none" stroke="#111" stroke-width="1.8"/>
<rect x="1315" y="474.5" width="15.5" height="15.1" rx="3.2" fill="url(#cbg)" stroke="#7a7a7a" stroke-width="1.3"/>
<path d="M1317.5 474.5 H1328 M1317.5 489.6 H1328" stroke="#404040" stroke-width="1.3"/>
<rect x="1315" y="512.0" width="15.5" height="15.1" rx="3.2" fill="url(#cbc)" stroke="#7a7a7a" stroke-width="1.3"/>
<path d="M1317.5 512.0 H1328 M1317.5 527.1 H1328" stroke="#404040" stroke-width="1.3"/>
<path d="M1317.9 521.2 L1320.5 524.1 L1327.4 514.6" fill="none" stroke="#111" stroke-width="1.8"/>
<rect x="1315" y="549.5" width="15.5" height="15.1" rx="3.2" fill="url(#cbc)" stroke="#7a7a7a" stroke-width="1.3"/>
<path d="M1317.5 549.5 H1328 M1317.5 564.6 H1328" stroke="#404040" stroke-width="1.3"/>
<path d="M1317.9 558.7 L1320.5 561.6 L1327.4 552.1" fill="none" stroke="#111" stroke-width="1.8"/>
<rect x="1315" y="587.0" width="15.5" height="15.1" rx="3.2" fill="url(#cbc)" stroke="#7a7a7a" stroke-width="1.3"/>
<path d="M1317.5 587.0 H1328 M1317.5 602.1 H1328" stroke="#404040" stroke-width="1.3"/>
<path d="M1317.9 596.2 L1320.5 599.1 L1327.4 589.6" fill="none" stroke="#111" stroke-width="1.8"/>
<rect x="1315" y="624.5" width="15.5" height="15.1" rx="3.2" fill="url(#cbc)" stroke="#7a7a7a" stroke-width="1.3"/>
<path d="M1317.5 624.5 H1328 M1317.5 639.6 H1328" stroke="#404040" stroke-width="1.3"/>
<path d="M1317.9 633.7 L1320.5 636.6 L1327.4 627.1" fill="none" stroke="#111" stroke-width="1.8"/>
<rect x="1315" y="662.0" width="15.5" height="15.1" rx="3.2" fill="url(#cbc)" stroke="#7a7a7a" stroke-width="1.3"/>
<path d="M1317.5 662.0 H1328 M1317.5 677.1 H1328" stroke="#404040" stroke-width="1.3"/>
<path d="M1317.9 671.2 L1320.5 674.1 L1327.4 664.6" fill="none" stroke="#111" stroke-width="1.8"/>
<rect x="1315" y="699.5" width="15.5" height="15.1" rx="3.2" fill="url(#cbg)" stroke="#7a7a7a" stroke-width="1.3"/>
<path d="M1317.5 699.5 H1328 M1317.5 714.6 H1328" stroke="#404040" stroke-width="1.3"/>
<path d="M1316 330.8 L1326.3 325.3 M1318.2 335.2 L1326.3 338.9 M1329.5 322.8 L1331 321.8 M1329.5 339.5 L1331 341" stroke="#555" stroke-width="1.1" fill="none"/>
<path d="M1312.4 333 H1316 M1318.6 333 H1322.3 M1324.9 333 H1327.4 M1331.1 333 H1332.6 M1329.3 330 V335" stroke="#f08a40" stroke-width="1.3" fill="none"/>
<path d="M1326 322.4 L1328.5 326 M1326 341.5 L1328.5 337.5" stroke="#f08a40" stroke-width="1.3" fill="none"/>
<path d="M1352.5 322.4 H1362 V325.5 H1367.5 V338 H1362 V340.8 H1352.5 Q1350.3 340.8 1350.3 338.5 V324.7 Q1350.3 322.4 1352.5 322.4 Z" fill="none" stroke="#c4c4c4" stroke-width="1.1"/>
<rect x="1349" y="330.8" width="20" height="2.2" fill="#f2f2f2"/>
<path d="M1349.3 331.9 H1355 M1357.5 331.9 H1360 M1363 331.9 H1369" stroke="#f4b888" stroke-width="1.2"/>
<rect x="1313.5" y="366.5" width="18.6" height="12.8" rx="1.3" fill="#fdfdfd" stroke="#5a6068" stroke-width="1.6"/>
<rect x="1316.3" y="370.2" width="12.4" height="5.8" fill="#a8b0bc" stroke="#4a5058" stroke-width="1.1"/>
<path d="M1314.8 366 L1319.7 360 L1320.8 364 L1328.5 361.4 V366 Z" fill="#b4bcc4" stroke="#6a7078" stroke-width="0.6" stroke-linejoin="round"/>
</svg>
<svg class="a" style="left:1290px;top:125px" width="130" height="100">
<defs><linearGradient id="vc" x1="0" y1="0" x2="0" y2="1"><stop offset="0" stop-color="#efefef"/><stop offset="0.5" stop-color="#e0e1e3"/><stop offset="1" stop-color="#e4e4e4"/></linearGradient>
<radialGradient id="vsh" cx="0.5" cy="0.5" r="0.5"><stop offset="0" stop-color="#000" stop-opacity="0.3"/><stop offset="1" stop-color="#000" stop-opacity="0"/></radialGradient></defs>
<ellipse cx="63" cy="83" rx="42" ry="5.5" fill="url(#vsh)"/>
<rect x="33.5" y="24.2" width="58" height="57.4" fill="url(#vc)" fill-opacity="0.8" stroke="#a0a0a0" stroke-width="1.2"/>
<rect x="45" y="35" width="35" height="35" fill="#d8dadd" fill-opacity="0.35"/>
<text x="0" y="0" font-family="Liberation Sans" font-weight="bold" font-size="15" fill="#8a9099" transform="translate(43.9 57.6) scale(0.81 1)">RIGHT</text>
<text x="0" y="0" font-family="Liberation Sans" font-weight="bold" font-size="15.5" fill="#7a80f0" transform="translate(33.3 20.8) scale(0.95 1)">Z</text>
<rect x="36.5" y="22" width="2" height="1.5" fill="#7a80f0"/>
<text x="0" y="0" font-family="Liberation Sans" font-weight="bold" font-size="14.5" fill="#f06a6a" transform="translate(25.6 90.5) scale(0.9 1)">X</text>
<text x="0" y="0" font-family="Liberation Sans" font-weight="bold" font-size="14.5" fill="#78e878" transform="translate(96.2 82.6) scale(0.88 1)">Y</text>
<rect x="92.5" y="77" width="2.5" height="2" fill="#78e878"/>
</svg>
<div class="a" style="left:564px;top:855px;width:296px;height:30px;background:#f0f0f0"></div>
<svg class="a" style="left:0;top:0" width="1423" height="951">
<path d="M568.5 871.5 C570 868.5 574.5 867.8 578.5 867.8 C584 867.8 588 869 588 871 C588 873 584 874.5 578.5 874.5 L573 874.2" fill="none" stroke="#3a3a3a" stroke-width="1.5"/>
<path d="M570.5 874.2 L575 871 L575 877.2 Z" fill="#2a2a2a"/>
<path d="M577.3 879.6 V863.6 H575.3 L578.3 859.6 L581.3 863.6 H579.3 V879.6 Z" fill="#f4f4f4" stroke="#3a3a3a" stroke-width="1.1" stroke-linejoin="round"/>
<path d="M594.8 867.8 H601.2 L598 872.0 Z" fill="#333"/>
<rect x="609.8" y="866.5" width="18.8" height="13" rx="1.2" fill="#f8f8f8" stroke="#4a4a4a" stroke-width="1.3"/><rect x="613.2" y="870.3" width="11.2" height="5.2" fill="#a8b0c0" stroke="#3a3a3a" stroke-width="1"/>
<path d="M611.5 866.5 L616.5 861 L619.5 864 L624.5 861.5 V866.5 Z" fill="#eaeaea" stroke="#4a4a4a" stroke-width="1.1" stroke-linejoin="round"/>
<path d="M647.5 879 C645.5 876.5 644 874 642.2 871.8 C641.2 870.6 642.6 869.4 644 870.2 L646.5 872.2 L645.5 863 C645.3 861.5 647.4 861.2 647.7 862.7 L649 869 L649.2 860.5 C649.2 859 651.4 859 651.5 860.5 L652 869 L653.5 861 C653.8 859.6 655.9 859.9 655.7 861.3 L655 869.5 L657.8 863.5 C658.4 862.2 660.3 862.8 659.8 864.2 L657.5 872 C656.8 875.5 655.5 877.5 654.5 879 Z" fill="#f6f6f6" stroke="#3a3a3a" stroke-width="1.15" stroke-linejoin="round"/>
<path d="M649.2 863 V868 M652 863.5 V868.5 M654.8 864 V869" stroke="#9a9a9a" stroke-width="0.9"/>
<circle cx="679.7" cy="868.3" r="5" fill="#d4e6ea" stroke="#4a4a4a" stroke-width="1.5"/><path d="M683.6 872.3 L688.5 877.2" stroke="#333" stroke-width="2.8" stroke-linecap="round"/>
<path d="M692 860.2 V865.2 M689.5 862.7 H694.5 M688.6 867.7 H694.4" stroke="#444" stroke-width="1.2"/>
<rect x="706.8" y="860.6" width="19" height="18.3" fill="none" stroke="#444" stroke-width="1.2" stroke-dasharray="2.2 1.6"/>
<defs><linearGradient id="mg" x1="0" y1="0" x2="0" y2="1"><stop offset="0" stop-color="#f0f8f8"/><stop offset="1" stop-color="#bcd4d8"/></linearGradient></defs>
<circle cx="714.8" cy="867.8" r="6.9" fill="url(#mg)" stroke="#3e3e3e" stroke-width="2"/><path d="M720 873.3 L725 878.3" stroke="#333" stroke-width="3.6" stroke-linecap="round"/>
<path d="M733.1999999999999 867.3 H739.6 L736.4 871.5 Z" fill="#333"/>
<rect x="748.3" y="860.3" width="18.6" height="15.4" rx="1.5" fill="#f2f2f2" stroke="#4a4a4a" stroke-width="1.2"/><rect x="750.6" y="862.4" width="14" height="10.6" rx="1" fill="#a8c0e4" stroke="#3a5a90" stroke-width="1.1"/>
<path d="M754.5 876 L753.3 879.2 H762.3 L761.1 876 Z" fill="#f4f4f4" stroke="#4a4a4a" stroke-width="1"/>
<path d="M770.8 867.3 H777.2 L774 871.5 Z" fill="#333"/>
<defs><linearGradient id="gg" x1="0" y1="0" x2="0" y2="1"><stop offset="0" stop-color="#5a5a5a"/><stop offset="1" stop-color="#8a8a8a"/></linearGradient></defs>
<rect x="786.8" y="860.5" width="18.8" height="18.6" rx="1.2" fill="url(#gg)" stroke="#4a4a4a" stroke-width="1.1"/>
<rect x="788.3" y="862.0" width="2.3" height="2.3" fill="#fff" fill-opacity="1.00"/>
<rect x="788.3" y="865.6" width="2.3" height="2.3" fill="#fff" fill-opacity="0.88"/>
<rect x="788.3" y="869.2" width="2.3" height="2.3" fill="#fff" fill-opacity="0.76"/>
<rect x="788.3" y="872.8" width="2.3" height="2.3" fill="#fff" fill-opacity="0.64"/>
<rect x="788.3" y="876.4" width="2.3" height="2.3" fill="#fff" fill-opacity="0.52"/>
<rect x="791.9" y="862.0" width="2.3" height="2.3" fill="#fff" fill-opacity="1.00"/>
<rect x="791.9" y="865.6" width="2.3" height="2.3" fill="#fff" fill-opacity="0.88"/>
<rect x="791.9" y="869.2" width="2.3" height="2.3" fill="#fff" fill-opacity="0.76"/>
<rect x="791.9" y="872.8" width="2.3" height="2.3" fill="#fff" fill-opacity="0.64"/>
<rect x="791.9" y="876.4" width="2.3" height="2.3" fill="#fff" fill-opacity="0.52"/>
<rect x="795.5" y="862.0" width="2.3" height="2.3" fill="#fff" fill-opacity="1.00"/>
<rect x="795.5" y="865.6" width="2.3" height="2.3" fill="#fff" fill-opacity="0.88"/>
<rect x="795.5" y="869.2" width="2.3" height="2.3" fill="#fff" fill-opacity="0.76"/>
<rect x="795.5" y="872.8" width="2.3" height="2.3" fill="#fff" fill-opacity="0.64"/>
<rect x="795.5" y="876.4" width="2.3" height="2.3" fill="#fff" fill-opacity="0.52"/>
<rect x="799.1" y="862.0" width="2.3" height="2.3" fill="#fff" fill-opacity="1.00"/>
<rect x="799.1" y="865.6" width="2.3" height="2.3" fill="#fff" fill-opacity="0.88"/>
<rect x="799.1" y="869.2" width="2.3" height="2.3" fill="#fff" fill-opacity="0.76"/>
<rect x="799.1" y="872.8" width="2.3" height="2.3" fill="#fff" fill-opacity="0.64"/>
<rect x="799.1" y="876.4" width="2.3" height="2.3" fill="#fff" fill-opacity="0.52"/>
<rect x="802.7" y="862.0" width="2.3" height="2.3" fill="#fff" fill-opacity="1.00"/>
<rect x="802.7" y="865.6" width="2.3" height="2.3" fill="#fff" fill-opacity="0.88"/>
<rect x="802.7" y="869.2" width="2.3" height="2.3" fill="#fff" fill-opacity="0.76"/>
<rect x="802.7" y="872.8" width="2.3" height="2.3" fill="#fff" fill-opacity="0.64"/>
<rect x="802.7" y="876.4" width="2.3" height="2.3" fill="#fff" fill-opacity="0.52"/>
<path d="M809.5 867.3 H815.9000000000001 L812.7 871.5 Z" fill="#333"/>
<rect x="825.4" y="861.2" width="18.2" height="16" rx="1.8" fill="#4d6ca8"/>
<rect x="827" y="862.8" width="7" height="5.9" fill="#a9c2e6"/><rect x="828.8" y="864.4" width="3.4" height="2.7" fill="none" stroke="#88a4d0" stroke-width="0.7"/>
<rect x="834.9" y="862.8" width="7" height="5.9" fill="#a9c2e6"/><rect x="836.6999999999999" y="864.4" width="3.4" height="2.7" fill="none" stroke="#88a4d0" stroke-width="0.7"/>
<rect x="827" y="870.1" width="7" height="5.9" fill="#a9c2e6"/><rect x="828.8" y="871.7" width="3.4" height="2.7" fill="none" stroke="#88a4d0" stroke-width="0.7"/>
<rect x="834.9" y="870.1" width="7" height="5.9" fill="#a9c2e6"/><rect x="836.6999999999999" y="871.7" width="3.4" height="2.7" fill="none" stroke="#88a4d0" stroke-width="0.7"/>
<path d="M848.1999999999999 867.3 H854.6 L851.4 871.5 Z" fill="#333"/>
</svg>
<div class="a" style="left:608px;top:443px;width:139px;height:28px;background:#f0f0f0"></div>
<div class="a" style="left:625px;top:445px;width:90px;height:23px;background:#fff;border:1px solid #d0d0d0"></div>
<div class="a" style="left:641.5px;top:448px;width:58px;height:17px;background:#e9e9e9"></div>
<div class="t" style="left:642.80px;top:449.59px;font-size:13.6px;color:#111;-webkit-text-stroke:0.2px #111;transform:scaleX(0.9313);transform-origin:0 0;">40.00 mm</div>
<svg class="a" style="left:600px;top:440px" width="150" height="35"><path d="M12 8 L14 10 L12 12 L14 14 L12 16 L14 18 L12 20 L14 22 L12 24 L14 26" fill="none" stroke="#cfcfcf" stroke-width="0.8"/><path d="M20 5 V29" stroke="#e0e0e0" stroke-width="1"/><circle cx="132.5" cy="10" r="1.6" fill="#666"/><circle cx="132.5" cy="16" r="1.6" fill="#666"/><circle cx="132.5" cy="22" r="1.6" fill="#666"/></svg>
</body></html>
